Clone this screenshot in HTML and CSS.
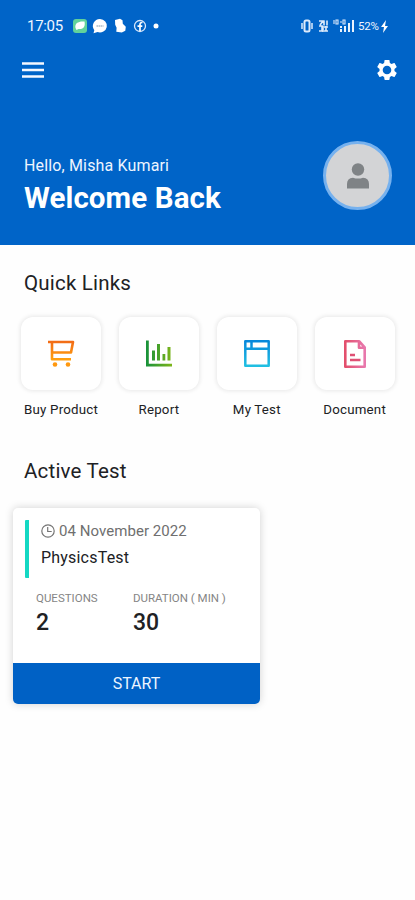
FILE: index.html
```html
<!DOCTYPE html>
<html lang="en">
<head>
<meta charset="utf-8">
<title>Dashboard</title>
<link rel="stylesheet" href="styles.css">
</head>
<body>
<header class="hero">
  <div class="status">
    <span class="time">17:05</span>
    <svg class="notif" width="90" height="20" viewBox="0 0 90 20">
      <rect x="3" y="3" width="14" height="14" rx="3" fill="#61d29b"/>
      <path d="M5.500 12c-1-5 3-7 9-6.500c1 5-1 8-6 7.500l-2 1z" fill="#fff"/>
      <path d="M30 3a7 6.700 0 1 1-2.500 13l-4 1.200.8-3A7 7 0 0 1 30 3z" fill="#fff"/>
      <path d="M26.500 10h7" stroke="#8197ac" stroke-width="1.200" stroke-dasharray="1.500 .5"/>
      <path d="M45 4l5-1.300 2.500 1.500.3 3.500 3 3-.5 4-3.500 1.800-5.500-.8.300-4-1.400-3z" fill="#fff"/>
      <circle cx="70" cy="10" r="5.500" fill="none" stroke="#d9e8fb" stroke-width="1.300"/>
      <path d="M70 15V8.500q0-2.200 2.500-2M67.500 10.200h4.800" fill="none" stroke="#fff" stroke-width="1.700"/>
      <circle cx="86" cy="10" r="2.500" fill="#fff"/>
    </svg>
    <svg class="signals" width="58" height="20" viewBox="0 0 58 20">
      <g fill="none" stroke="#dceafb">
        <rect x="5.500" y="4.500" width="5" height="11" rx="1.500" stroke-width="2"/>
        <path d="M3 7v6M13 7v6" stroke-width="1.500"/>
        <path d="M20 5h4l-3 4M25 4.500v5M28 4.500v5M20 10h3v5h-3M24 10v6M27 10v5M25 15h4M25 11h4" stroke-width="1.600"/>
        <path d="M35 4v4M37 4h2v4h-2zM41 6h2M44 4h2v4h-2z" stroke-width="1.100"/>
      </g>
      <path d="M41 13h2v3h-2zM41 10h2v2h-2zM45 10h2v6h-2zM49 7h2v9h-2zM53 4h2v12h-2z" fill="#eaf3fd"/>
    </svg>
    <span class="battery">52%</span>
    <svg class="bolt" width="8" height="13" viewBox="0 0 8 13"><path d="M5 0L0 7h3l-1 6 5-7H4z" fill="#fff"/></svg>
  </div>
  <nav class="toolbar">
    <svg width="22" height="17" viewBox="0 0 22 17"><path d="M0 1.500h22M0 8h22M0 14.500h22" stroke="#f5f8ff" stroke-width="2.600"/></svg>
    <svg width="24" height="24" viewBox="0 0 24 24"><path fill="#fff" d="M19.430 12.980c.04-.32.070-.64.070-.98s-.03-.66-.07-.98l2.110-1.650c.19-.15.240-.42.120-.64l-2-3.460c-.12-.22-.39-.3-.61-.22l-2.490 1c-.52-.4-1.080-.73-1.690-.98l-.38-2.650C14.460 2.180 14.250 2 14 2h-4c-.25 0-.46.18-.49.42l-.38 2.650c-.61.25-1.170.59-1.690.98l-2.490-1c-.23-.09-.49 0-.61.22l-2 3.460c-.13.22-.07.49.12.64l2.110 1.650c-.04.32-.07.65-.07.98s.03.66.07.98l-2.110 1.650c-.19.15-.24.42-.12.64l2 3.460c.12.22.39.3.61.22l2.490-1c.52.4 1.080.73 1.690.98l.38 2.650c.03.24.24.42.49.42h4c.25 0 .46-.18.49-.42l.38-2.650c.61-.25 1.170-.59 1.690-.98l2.490 1c.23.09.49 0 .61-.22l2-3.460c.12-.22.07-.49-.12-.64l-2.110-1.650zM12 16.300a4.300 4.300 0 1 1 0-8.600 4.300 4.300 0 0 1 0 8.600z"/></svg>
  </nav>
  <div class="greeting">
    <div>
      <p class="hello">Hello, Misha Kumari</p>
      <h1>Welcome Back</h1>
    </div>
    <div class="avatar">
      <svg width="24" height="26" viewBox="0 0 24 26" fill="#7f8386"><circle cx="12" cy="6.500" r="6.200"/><path d="M1 25.500v-4.500q0-6 6-6.300 5 1.800 10 0 6 .3 6 6.300v4.500z"/></svg>
    </div>
  </div>
</header>
<main>
  <h2>Quick Links</h2>
  <div class="links">
    <div class="link">
      <div class="tile"><svg width="28" height="28" viewBox="0 0 28 28"><defs><linearGradient id="og" x1="0" y1="0" x2="0" y2="1"><stop offset="0" stop-color="#f26d16"/><stop offset="1" stop-color="#ffa00f"/></linearGradient></defs><path d="M1 2h25l-2 10.500H5.500M5 2.500v16.800h19" fill="none" stroke="url(#og)" stroke-width="2.600" stroke-linejoin="round"/><circle cx="8" cy="24.500" r="2.300" fill="#ff980f"/><circle cx="21" cy="24.500" r="2.300" fill="#ff980f"/></svg></div>
      <span>Buy Product</span>
    </div>
    <div class="link">
      <div class="tile"><svg width="28" height="28" viewBox="0 0 28 28"><defs><linearGradient id="gg"><stop offset="0" stop-color="#16913a"/><stop offset="1" stop-color="#7eb51a"/></linearGradient></defs><path d="M1 .5h2.800v23.200H27v2.800H1zM7 10.500h3v10H7zM12 4h3v16.500h-3zM17.500 14h2.800v6.500h-2.800zM22.500 7h3v13.500h-3z" fill="url(#gg)"/></svg></div>
      <span>Report</span>
    </div>
    <div class="link">
      <div class="tile"><svg width="28" height="28" viewBox="0 0 28 28"><defs><linearGradient id="bg" x1="0" y1="0" x2="0" y2="1"><stop offset="0" stop-color="#0788db"/><stop offset="1" stop-color="#20bfe2"/></linearGradient></defs><path d="M2.300 1.300h23.400v24.400H2.300zM2.300 8.700h23.400M8.500 1.300v7.400" fill="none" stroke="url(#bg)" stroke-width="2.500" stroke-linejoin="round"/></svg></div>
      <span>My Test</span>
    </div>
    <div class="link">
      <div class="tile"><svg width="28" height="30" viewBox="0 0 28 30"><defs><linearGradient id="pg"><stop offset="0" stop-color="#e34f6c"/><stop offset="1" stop-color="#e878ad"/></linearGradient></defs><path d="M4.300 2.300h14l5.400 6v19.400H4.300zM18 2.300v6.500h5.500" fill="none" stroke="url(#pg)" stroke-width="2.600" stroke-linejoin="round"/><path d="M9 16h5M9 21h10.500" stroke="#df5074" stroke-width="2.300"/></svg></div>
      <span>Document</span>
    </div>
  </div>
  <h2 class="active">Active Test</h2>
  <article class="card">
    <div class="info">
      <div class="date"><svg width="14" height="14" viewBox="0 0 14 14" fill="none" stroke="#757575" stroke-width="1.200"><circle cx="7" cy="7" r="6.200"/><path d="M6.700 3v4.500h4"/></svg><span>04 November 2022</span></div>
      <div class="name">PhysicsTest</div>
    </div>
    <div class="stats">
      <div><div class="label">QUESTIONS</div><div class="value">2</div></div>
      <div><div class="label duration">DURATION ( MIN )</div><div class="value">30</div></div>
    </div>
    <button class="start">START</button>
  </article>
</main>
</body>
</html>
```
FILE: styles.css
```css
* { box-sizing: border-box; }
body { margin: 0; min-height: 900px; background: #fefefe; color: #202124; font-family: Roboto, "Liberation Sans", sans-serif; }
svg { display: block; flex: none; }
p, h1, h2 { margin: 0; }
.hero { height: 245px; padding: 16px 16px 0 22px; background: #0064c8; color: #fff; }
.status { display: flex; align-items: center; height: 20px; padding-left: 5px; }
.time { width: 43px; font-size: 15px; line-height: 20px; letter-spacing: -.3px; color: #f0f6ff; }
.signals { margin-left: 139px; }
.battery { width: 23px; margin-left: 1px; font-size: 11.5px; letter-spacing: -.2px; line-height: 20px; color: #f0f6ff; }
.toolbar { display: flex; align-items: center; justify-content: space-between; height: 24px; margin-top: 22px; }
.greeting { display: flex; justify-content: space-between; margin-top: 59px; padding: 0 7px 0 2px; }
.hello { margin-top: 15px; font-size: 16px; line-height: 20px; letter-spacing: .15px; color: #edf5ff; }
h1 { margin-top: 4px; font-size: 29.5px; line-height: 37px; font-weight: 700; letter-spacing: .1px; }
.avatar { display: flex; align-items: center; justify-content: center; width: 69px; height: 69px; border: 3px solid #76b1ee; border-radius: 50%; background: #d3d4d6; }
main { padding: 25px 0 0 13px; }
h2 { padding-left: 11px; font-size: 20.5px; line-height: 26px; font-weight: 400; letter-spacing: .2px; }
.links { display: flex; gap: 17.900px; margin-top: 21px; padding-left: 8px; }
.link { width: 80px; text-align: center; font-size: 13.3px; line-height: 18px; letter-spacing: .2px; white-space: nowrap; }
.tile { display: flex; align-items: center; justify-content: center; height: 73px; margin-bottom: 11px; border-radius: 12px; background: #fff; box-shadow: 0 0 4px 1px rgba(0,0,0,.09); }
.active { margin-top: 39px; }
.card { width: 247px; height: 196px; margin-top: 24px; padding-top: 12px; border-radius: 5px; background: #fff; box-shadow: 0 0 8px rgba(0,0,0,.18); overflow: hidden; }
.info { height: 58px; margin-left: 12px; padding-left: 12px; border-left: 4px solid #14d8c3; border-radius: 1px; }
.date { display: flex; align-items: center; gap: 4px; height: 22px; font-size: 15px; letter-spacing: .05px; color: #6f6f6f; }
.name { margin-top: 6px; font-size: 16px; line-height: 20px; letter-spacing: .2px; }
.stats { display: grid; grid-template-columns: 97px 1fr; height: 85px; padding: 12px 0 0 23px; }
.label { font-size: 11.500px; line-height: 16px; color: #858585; white-space: nowrap; }
.value { margin-top: 3px; font-size: 23px; line-height: 28px; font-weight: 500; }
.start { display: block; width: 100%; height: 41px; padding: 0; border: 0; background: #0061c5; color: #edf5ff; font: 400 16px/41px Roboto, "Liberation Sans", sans-serif; }
```
